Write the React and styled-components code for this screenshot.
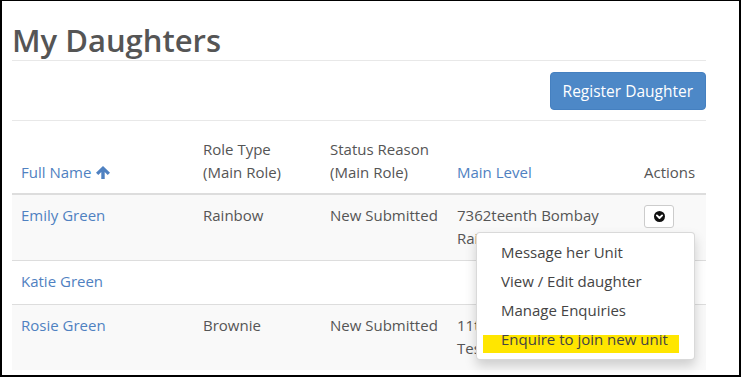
import React from "react";
import styled, { createGlobalStyle } from "styled-components";

const GlobalStyle = createGlobalStyle`
  html, body {
    margin: 0;
    padding: 0;
    background: #fff;
  }
  body {
    font-family: "Open Sans", "Noto Sans", sans-serif;
    color: #555;
  }
`;

const daughters = [
  {
    name: "Emily Green",
    role: "Rainbow",
    status: "New Submitted",
    level: "7362teenth Bombay Rainbow Unit",
    open: true,
  },
  { name: "Katie Green", role: "", status: "", level: "" },
  {
    name: "Rosie Green",
    role: "Brownie",
    status: "New Submitted",
    level: "11th Middlesbrough Test Brownies",
  },
];

const menuItems = [
  "Message her Unit",
  "View / Edit daughter",
  "Manage Enquiries",
  "Enquire to join new unit",
];

function SortUpIcon() {
  return (
    <svg width="14" height="13" viewBox="0 0 14 13">
      <path
        d="M7 0 L14 6.8 L11.7 9 L8.7 6 V13 H5.3 V6 L2.3 9 L0 6.8 Z"
        fill="#4f81c1"
      />
    </svg>
  );
}

function ChevronCircleDown() {
  return (
    <svg width="11" height="11" viewBox="0 0 11 11">
      <circle cx="5.5" cy="5.5" r="5.5" fill="#111" />
      <path
        d="M2.9 4.4 L5.5 7 L8.1 4.4"
        fill="none"
        stroke="#fff"
        strokeWidth="1.9"
        strokeLinecap="round"
        strokeLinejoin="round"
      />
    </svg>
  );
}

export default function App() {
  return (
    <>
      <GlobalStyle />
      <Frame>
        <Heading>My Daughters</Heading>
        <Toolbar>
          <PrimaryButton>Register Daughter</PrimaryButton>
        </Toolbar>
        <Table>
          <colgroup>
            <col style={{ width: 182 }} />
            <col style={{ width: 127 }} />
            <col style={{ width: 127 }} />
            <col style={{ width: 187 }} />
            <col style={{ width: 71 }} />
          </colgroup>
          <thead>
            <tr>
              <Th link>
                Full Name <SortUpIcon />
              </Th>
              <Th>
                Role Type
                <br />
                (Main Role)
              </Th>
              <Th>
                Status Reason
                <br />
                (Main Role)
              </Th>
              <Th link>Main Level</Th>
              <Th>Actions</Th>
            </tr>
          </thead>
          <tbody>
            {daughters.map((d, i) => (
              <Row key={d.name} striped={i % 2 === 0}>
                <Td>
                  <NameLink>{d.name}</NameLink>
                </Td>
                <Td>{d.role}</Td>
                <Td>{d.status}</Td>
                <Td>{d.level}</Td>
                <Td>
                  <ActionWrap>
                    <ActionButton>
                      <ChevronCircleDown />
                    </ActionButton>
                    {d.open && (
                      <Menu>
                        {menuItems.map((m, j) => (
                          <MenuItem key={m} marked={j === menuItems.length - 1}>
                            <span>{m}</span>
                          </MenuItem>
                        ))}
                      </Menu>
                    )}
                  </ActionWrap>
                </Td>
              </Row>
            ))}
          </tbody>
        </Table>
      </Frame>
    </>
  );
}

const Frame = styled.div`
  width: 741px;
  height: 377px;
  box-sizing: border-box;
  border: 2px solid #000;
  border-top-width: 1px;
  padding: 0 33px 0 10px;
  overflow: hidden;
  background: #fff;
`;

const Heading = styled.h1`
  margin: 0;
  padding: 21px 0 0;
  height: 38px;
  font-size: 31px;
  line-height: 36px;
  font-weight: 600;
  color: #555;
  border-bottom: 1px solid #e8e8e8;
`;

const Toolbar = styled.div`
  display: flex;
  justify-content: flex-end;
  padding: 11px 0 10px;
  border-bottom: 1px solid #e8e8e8;
`;

const PrimaryButton = styled.button`
  height: 38px;
  padding: 0 12px;
  background: #4d88c7;
  border: 1px solid #4580c0;
  border-radius: 4px;
  color: #fff;
  font-family: "Open Sans", "Noto Sans", sans-serif;
  font-size: 15.5px;
  font-weight: 500;
`;

const Table = styled.table`
  width: 694px;
  margin-top: 8px;
  border-collapse: collapse;
  table-layout: fixed;
  font-size: 15px;
  line-height: 23px;
`;

const Th = styled.th`
  padding: 9px 9px 9px;
  text-align: left;
  vertical-align: bottom;
  font-weight: 400;
  color: ${(p) => (p.link ? "#4f81c1" : "#555")};
  border-bottom: 2px solid #ddd;
  white-space: nowrap;

  svg {
    vertical-align: -1px;
    margin-left: 1px;
  }
`;

const Row = styled.tr`
  background: ${(p) => (p.striped ? "#f9f9f9" : "#fff")};
  border-top: 1px solid #ddd;
`;

const Td = styled.td`
  padding: 9px 9px 10px;
  vertical-align: top;
  color: #555;
`;

const NameLink = styled.a`
  color: #4f81c1;
  text-decoration: none;
`;

const ActionWrap = styled.div`
  position: relative;
  display: inline-block;
`;

const ActionButton = styled.button`
  display: flex;
  align-items: center;
  justify-content: center;
  width: 30px;
  height: 23px;
  margin-top: 1px;
  padding: 0;
  background: #fff;
  border: 1px solid #ccc;
  border-radius: 3px;
`;

const Menu = styled.ul`
  position: absolute;
  top: calc(100% + 4px);
  right: -21px;
  z-index: 10;
  width: 217px;
  margin: 0;
  padding: 5px 0;
  list-style: none;
  background: #fff;
  border: 1px solid rgba(0, 0, 0, 0.15);
  border-radius: 4px;
  box-shadow: 0 6px 12px rgba(0, 0, 0, 0.175);
`;

const MenuItem = styled.li`
  position: relative;
  padding: 3px 10px 3px 24px;
  line-height: 23px;
  font-size: 15px;
  color: #444;
  white-space: nowrap;

  span {
    position: relative;
  }

  &::before {
    content: "";
    display: ${(p) => (p.marked ? "block" : "none")};
    position: absolute;
    left: 6px;
    right: 15px;
    top: 10px;
    bottom: 1px;
    background: #ffe600;
  }
`;
